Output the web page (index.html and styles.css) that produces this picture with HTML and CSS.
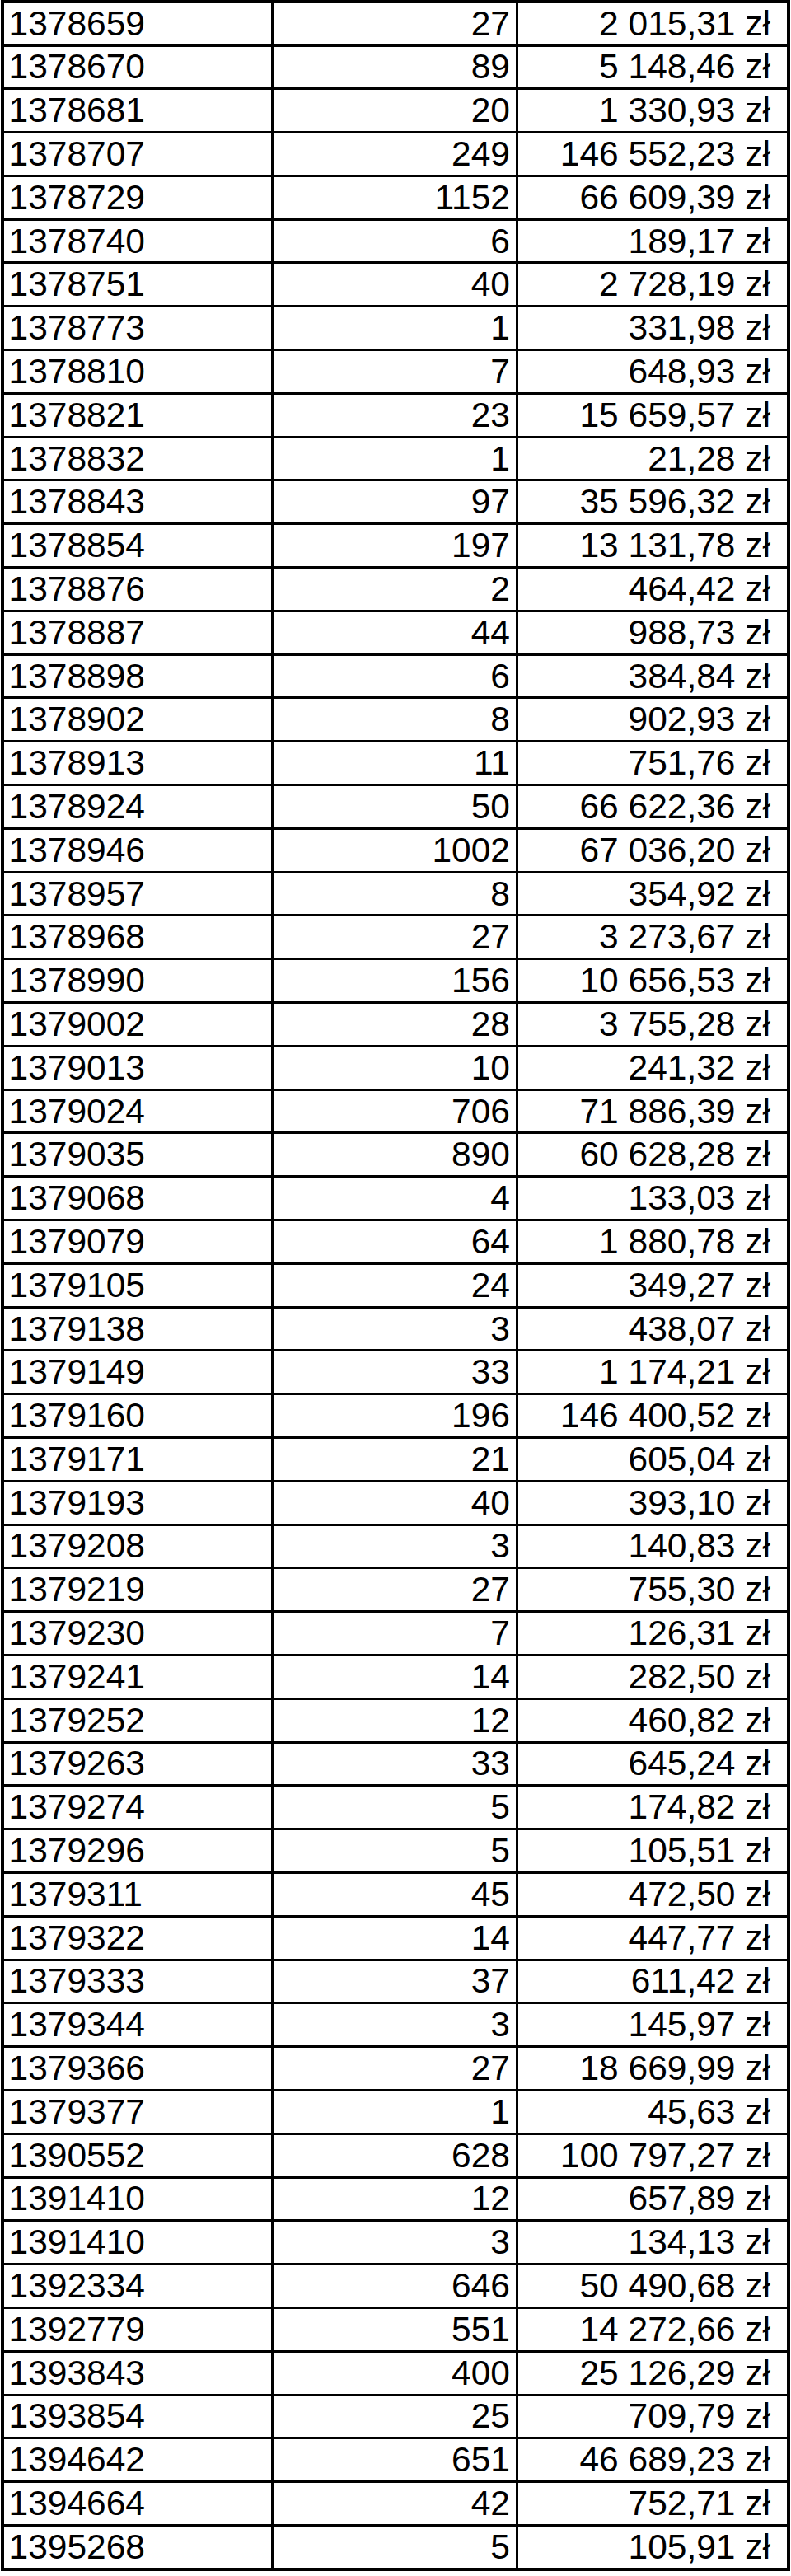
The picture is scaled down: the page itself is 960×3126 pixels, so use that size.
FILE: index.html
```html
<!DOCTYPE html>
<html lang="pl">
<head>
<meta charset="utf-8">
<title>Tabela</title>
<link rel="stylesheet" href="styles.css">
</head>
<body>
<table class="grid">
<colgroup><col class="c-id"><col class="c-qty"><col class="c-amt"></colgroup>
<tbody>
<tr><td class="id">1378659</td><td class="qty">27</td><td class="amt">2 015,31 zł</td></tr>
<tr><td class="id">1378670</td><td class="qty">89</td><td class="amt">5 148,46 zł</td></tr>
<tr><td class="id">1378681</td><td class="qty">20</td><td class="amt">1 330,93 zł</td></tr>
<tr><td class="id">1378707</td><td class="qty">249</td><td class="amt">146 552,23 zł</td></tr>
<tr><td class="id">1378729</td><td class="qty">1152</td><td class="amt">66 609,39 zł</td></tr>
<tr><td class="id">1378740</td><td class="qty">6</td><td class="amt">189,17 zł</td></tr>
<tr><td class="id">1378751</td><td class="qty">40</td><td class="amt">2 728,19 zł</td></tr>
<tr><td class="id">1378773</td><td class="qty">1</td><td class="amt">331,98 zł</td></tr>
<tr><td class="id">1378810</td><td class="qty">7</td><td class="amt">648,93 zł</td></tr>
<tr><td class="id">1378821</td><td class="qty">23</td><td class="amt">15 659,57 zł</td></tr>
<tr><td class="id">1378832</td><td class="qty">1</td><td class="amt">21,28 zł</td></tr>
<tr><td class="id">1378843</td><td class="qty">97</td><td class="amt">35 596,32 zł</td></tr>
<tr><td class="id">1378854</td><td class="qty">197</td><td class="amt">13 131,78 zł</td></tr>
<tr><td class="id">1378876</td><td class="qty">2</td><td class="amt">464,42 zł</td></tr>
<tr><td class="id">1378887</td><td class="qty">44</td><td class="amt">988,73 zł</td></tr>
<tr><td class="id">1378898</td><td class="qty">6</td><td class="amt">384,84 zł</td></tr>
<tr><td class="id">1378902</td><td class="qty">8</td><td class="amt">902,93 zł</td></tr>
<tr><td class="id">1378913</td><td class="qty">11</td><td class="amt">751,76 zł</td></tr>
<tr><td class="id">1378924</td><td class="qty">50</td><td class="amt">66 622,36 zł</td></tr>
<tr><td class="id">1378946</td><td class="qty">1002</td><td class="amt">67 036,20 zł</td></tr>
<tr><td class="id">1378957</td><td class="qty">8</td><td class="amt">354,92 zł</td></tr>
<tr><td class="id">1378968</td><td class="qty">27</td><td class="amt">3 273,67 zł</td></tr>
<tr><td class="id">1378990</td><td class="qty">156</td><td class="amt">10 656,53 zł</td></tr>
<tr><td class="id">1379002</td><td class="qty">28</td><td class="amt">3 755,28 zł</td></tr>
<tr><td class="id">1379013</td><td class="qty">10</td><td class="amt">241,32 zł</td></tr>
<tr><td class="id">1379024</td><td class="qty">706</td><td class="amt">71 886,39 zł</td></tr>
<tr><td class="id">1379035</td><td class="qty">890</td><td class="amt">60 628,28 zł</td></tr>
<tr><td class="id">1379068</td><td class="qty">4</td><td class="amt">133,03 zł</td></tr>
<tr><td class="id">1379079</td><td class="qty">64</td><td class="amt">1 880,78 zł</td></tr>
<tr><td class="id">1379105</td><td class="qty">24</td><td class="amt">349,27 zł</td></tr>
<tr><td class="id">1379138</td><td class="qty">3</td><td class="amt">438,07 zł</td></tr>
<tr><td class="id">1379149</td><td class="qty">33</td><td class="amt">1 174,21 zł</td></tr>
<tr><td class="id">1379160</td><td class="qty">196</td><td class="amt">146 400,52 zł</td></tr>
<tr><td class="id">1379171</td><td class="qty">21</td><td class="amt">605,04 zł</td></tr>
<tr><td class="id">1379193</td><td class="qty">40</td><td class="amt">393,10 zł</td></tr>
<tr><td class="id">1379208</td><td class="qty">3</td><td class="amt">140,83 zł</td></tr>
<tr><td class="id">1379219</td><td class="qty">27</td><td class="amt">755,30 zł</td></tr>
<tr><td class="id">1379230</td><td class="qty">7</td><td class="amt">126,31 zł</td></tr>
<tr><td class="id">1379241</td><td class="qty">14</td><td class="amt">282,50 zł</td></tr>
<tr><td class="id">1379252</td><td class="qty">12</td><td class="amt">460,82 zł</td></tr>
<tr><td class="id">1379263</td><td class="qty">33</td><td class="amt">645,24 zł</td></tr>
<tr><td class="id">1379274</td><td class="qty">5</td><td class="amt">174,82 zł</td></tr>
<tr><td class="id">1379296</td><td class="qty">5</td><td class="amt">105,51 zł</td></tr>
<tr><td class="id">1379311</td><td class="qty">45</td><td class="amt">472,50 zł</td></tr>
<tr><td class="id">1379322</td><td class="qty">14</td><td class="amt">447,77 zł</td></tr>
<tr><td class="id">1379333</td><td class="qty">37</td><td class="amt">611,42 zł</td></tr>
<tr><td class="id">1379344</td><td class="qty">3</td><td class="amt">145,97 zł</td></tr>
<tr><td class="id">1379366</td><td class="qty">27</td><td class="amt">18 669,99 zł</td></tr>
<tr><td class="id">1379377</td><td class="qty">1</td><td class="amt">45,63 zł</td></tr>
<tr><td class="id">1390552</td><td class="qty">628</td><td class="amt">100 797,27 zł</td></tr>
<tr><td class="id">1391410</td><td class="qty">12</td><td class="amt">657,89 zł</td></tr>
<tr><td class="id">1391410</td><td class="qty">3</td><td class="amt">134,13 zł</td></tr>
<tr><td class="id">1392334</td><td class="qty">646</td><td class="amt">50 490,68 zł</td></tr>
<tr><td class="id">1392779</td><td class="qty">551</td><td class="amt">14 272,66 zł</td></tr>
<tr><td class="id">1393843</td><td class="qty">400</td><td class="amt">25 126,29 zł</td></tr>
<tr><td class="id">1393854</td><td class="qty">25</td><td class="amt">709,79 zł</td></tr>
<tr><td class="id">1394642</td><td class="qty">651</td><td class="amt">46 689,23 zł</td></tr>
<tr><td class="id">1394664</td><td class="qty">42</td><td class="amt">752,71 zł</td></tr>
<tr><td class="id">1395268</td><td class="qty">5</td><td class="amt">105,91 zł</td></tr>
</tbody>
</table>
</body>
</html>
```

FILE: styles.css
```css
html, body {
  margin: 0;
  padding: 0;
  background: #ffffff;
}

body {
  padding: 0 0 0 1px;
}

.grid {
  border-collapse: separate;
  border-spacing: 0;
  table-layout: fixed;
  width: 958px;
  border-top: 4px solid #000;
  border-left: 4px solid #000;
  font-family: "Liberation Sans", Arial, sans-serif;
  font-size: 42.5px;
  color: #000;
}

.c-id { width: 327px; }
.c-qty { width: 297px; }
.c-amt { width: 330px; }

.grid td {
  border-right: 3px solid #000;
  border-bottom: 3px solid #000;
  height: 49.8px;
  padding: 0;
  line-height: normal;
  white-space: nowrap;
  vertical-align: middle;
  box-sizing: content-box;
}

.grid tr:first-child td {
  height: 49.5px;
}

.grid tr:last-child td {
  border-bottom-width: 4px;
}

.grid td.id {
  text-align: left;
  padding-left: 5.5px;
}

.grid td.qty {
  text-align: right;
  padding-right: 7px;
}

.grid td.amt {
  text-align: right;
  padding-right: 20px;
  border-right-width: 4px;
}
```
